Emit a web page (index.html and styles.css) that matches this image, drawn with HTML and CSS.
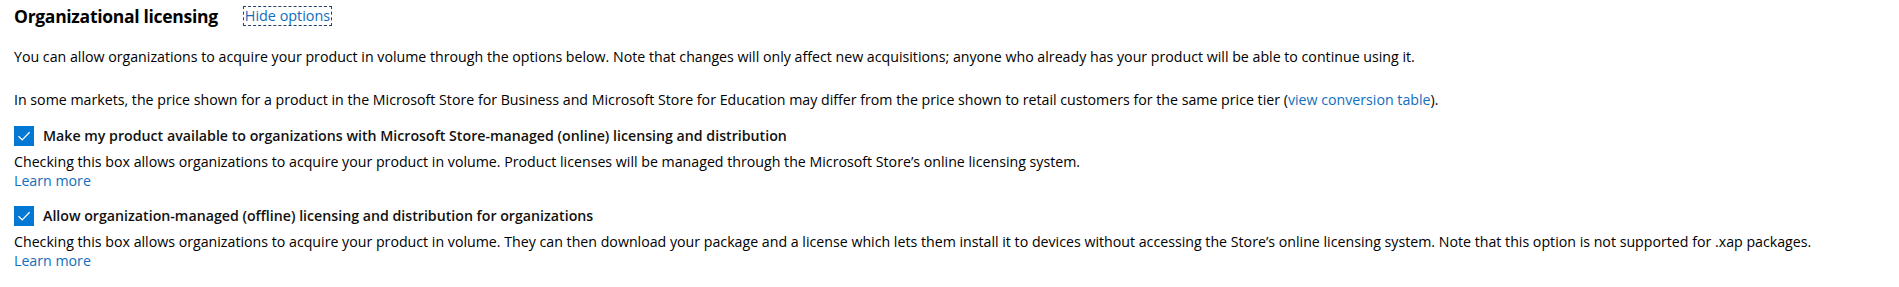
FILE: index.html
```html
<!DOCTYPE html>
<html lang="en">
<head>
  <meta charset="UTF-8" />
  <title>Organizational licensing</title>
  <link rel="stylesheet" href="styles.css">
</head>
<body>

  <div class="licensing">
    <div class="licensing-head">
      <h2>Organizational licensing</h2>
      <a href="#" class="toggle">Hide options</a>
    </div>

    <p class="intro">You can allow organizations to acquire your product in volume through the options below. Note that changes will only affect new acquisitions; anyone who already has your product will be able to continue using it.</p>
    <p class="intro intro--second">In some markets, the price shown for a product in the Microsoft Store for Business and Microsoft Store for Education may differ from the price shown to retail customers for the same price tier (<a href="#">view conversion table</a>).</p>

    <div class="option">
      <label class="option-label">
        <span class="check">
          <svg viewBox="0 0 20 20" width="20" height="20"><path d="M4.5 10.2 L8.2 13.9 L15.6 6.3" fill="none" stroke="#fff" stroke-width="1.3"/></svg>
        </span>
        Make my product available to organizations with Microsoft Store-managed (online) licensing and distribution
      </label>
      <div class="option-desc">Checking this box allows organizations to acquire your product in volume. Product licenses will be managed through the Microsoft Store’s online licensing system.</div>
      <a href="#" class="learn">Learn more</a>
    </div>

    <div class="option">
      <label class="option-label">
        <span class="check">
          <svg viewBox="0 0 20 20" width="20" height="20"><path d="M4.5 10.2 L8.2 13.9 L15.6 6.3" fill="none" stroke="#fff" stroke-width="1.3"/></svg>
        </span>
        Allow organization-managed (offline) licensing and distribution for organizations
      </label>
      <div class="option-desc">Checking this box allows organizations to acquire your product in volume. They can then download your package and a license which lets them install it to devices without accessing the Store’s online licensing system. Note that this option is not supported for .xap packages.</div>
      <a href="#" class="learn">Learn more</a>
    </div>
  </div>

</body>
</html>
```

FILE: styles.css
```css
body {
  margin: 0;
  font-family: 'Segoe UI', 'Open Sans', sans-serif;
  font-size: 14.2px;
  color: #000;
  background: #fff;
}
.licensing {
  padding: 4px 14px 0;
}
.licensing-head {
  display: flex;
  align-items: center;
  height: 24px;
}
h2 {
  margin: 0;
  font-size: 17.5px;
  font-weight: 700;
  letter-spacing: -0.3px;
  line-height: 24px;
}
a {
  color: #106ebe;
  text-decoration: none;
}
.toggle {
  margin-left: 26px;
  padding: 0 1px;
  line-height: 18px;
  outline: 1px dashed #1f3f6e;
  font-size: 14.4px;
}
.intro {
  margin: 19px 0 0;
  line-height: 20px;
}
.intro--second {
  margin-top: 23px;
}
.option {
  margin-top: 16px;
  line-height: 19px;
}
.option-label {
  display: flex;
  align-items: center;
  gap: 9px;
  font-weight: 600;
  line-height: 20px;
  color: #111;
}
.check {
  width: 20px;
  height: 20px;
  background: #0078d4;
  flex-shrink: 0;
}
.check svg {
  display: block;
}
.option-desc {
  margin-top: 6px;
}
.learn {
  display: block;
}
```
